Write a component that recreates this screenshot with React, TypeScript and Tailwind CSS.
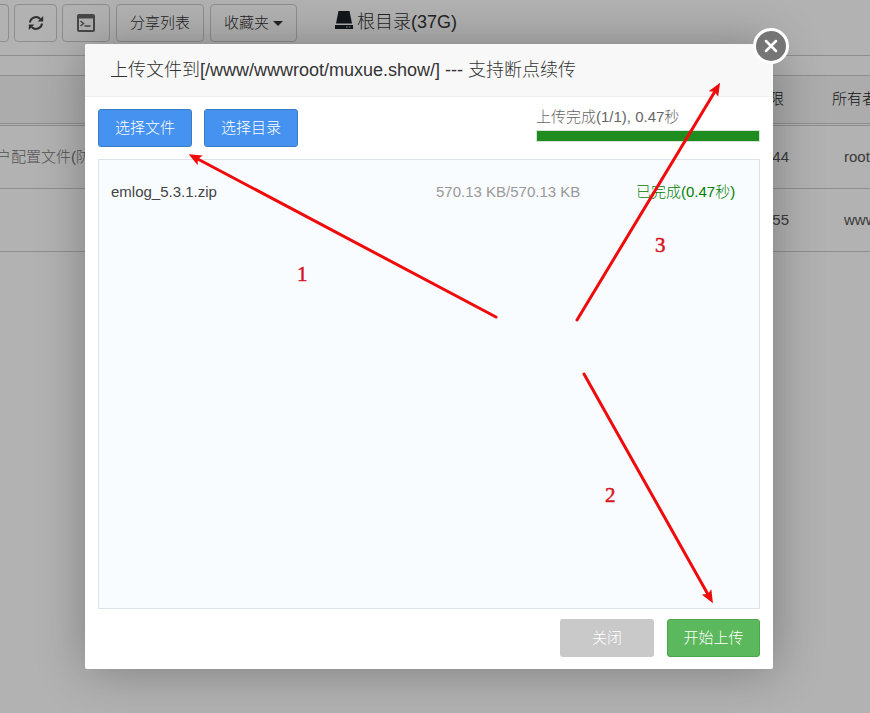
import React from "react";

const files = [
  { name: "emlog_5.3.1.zip", size: "570.13 KB/570.13 KB", status: "已完成(0.47秒)" },
];

const RefreshIcon = () => (
  <svg width="16" height="16" viewBox="0 0 16 16" fill="none" stroke="#444" strokeWidth="2" aria-hidden="true">
    <path d="M2 7.500A6 6 0 0 1 12.300 4" />
    <path d="M14 8.500A6 6 0 0 1 3.700 12" />
    <path d="M15.200 1v5.500H9.700z" fill="#444" stroke="none" />
    <path d="M0.800 15V9.500h5.500z" fill="#444" stroke="none" />
  </svg>
);

const TerminalIcon = () => (
  <svg width="18" height="18" viewBox="0 0 18 18" fill="none" stroke="#666" aria-hidden="true">
    <rect x="1" y="1" width="16" height="16" rx="1" strokeWidth="2" />
    <path d="M1 3h16" strokeWidth="3" />
    <path d="M3.500 7l3 2.500-3 2.500M7.500 12h6" strokeWidth="1.500" />
  </svg>
);

const DiskIcon = () => (
  <svg width="18" height="18" viewBox="0 0 18 18" fill="#1b2028" aria-hidden="true">
    <path d="M3.500 0h11l2.500 12.500H1z" />
    <path d="M0 14h18v4H0z" />
    <path d="M11 15.500h1.500v1H11zM14 15.500h1.500v1H14z" fill="#ddd" />
  </svg>
);

const Annotations = () => (
  <svg
    className="pointer-events-none absolute left-0 top-0"
    width="688"
    height="625"
    viewBox="0 0 688 625"
    aria-hidden="true"
  >
    <defs>
      <marker
        id="head"
        markerUnits="userSpaceOnUse"
        markerWidth="14"
        markerHeight="12"
        refX="7"
        refY="6"
        orient="auto"
      >
        <path d="M13 6L0 0.500L2.500 6L0 11.500z" fill="#f00a0a" />
      </marker>
    </defs>
    <g stroke="#f00a0a" strokeWidth="3" strokeLinecap="round">
      <path d="M411 273L109 113" markerEnd="url(#head)" />
      <path d="M492 276L632 44" markerEnd="url(#head)" />
      <path d="M499 330L625 554" markerEnd="url(#head)" />
    </g>
    <g
      fill="#d9121f"
      stroke="#d9121f"
      strokeWidth="0.5"
      className="font-['Liberation_Serif',serif] text-[21px]"
    >
      <text x="212" y="237">1</text>
      <text x="570" y="208">3</text>
      <text x="520" y="458">2</text>
    </g>
  </svg>
);

const toolButton =
  "flex h-[38px] items-center justify-center rounded border border-[#ccc] text-[15px] text-[#333]";

const App = () => {
  return (
    <div className="relative h-screen overflow-hidden bg-white font-['Liberation_Sans','Noto_Sans_CJK_SC',sans-serif] text-[15px] font-light text-[#555]">
      {/* File manager */}
      <div className="flex h-14 items-start border-b border-[#ccc] pt-1">
        <button className={`${toolButton} -ml-2 w-[17px]`} aria-label="返回"></button>
        <button className={`${toolButton} ml-[5px] w-[43px]`} aria-label="刷新">
          <RefreshIcon />
        </button>
        <button className={`${toolButton} ml-[5px] w-12`} aria-label="终端">
          <TerminalIcon />
        </button>
        <button className={`${toolButton} ml-1.5 w-[88px]`}>分享列表</button>
        <button className={`${toolButton} ml-1.5 w-[87px] gap-1`}>
          收藏夹
          <svg width="10" height="5" viewBox="0 0 10 5" fill="#333" aria-hidden="true">
            <path d="M0 0h10l-5 5z" />
          </svg>
        </button>
        <div className="ml-[38px] flex h-8 items-center gap-1 text-[18px] text-[#333]">
          <DiskIcon />
          <span className="pt-1">根目录(37G)</span>
        </div>
      </div>

      <table className="mt-[19px] w-full table-fixed border-collapse whitespace-nowrap text-left">
        <thead>
          <tr className="h-12 border-y border-[#ccc] bg-[#f6f6f6] text-[#222]">
            <th className="font-light"></th>
            <th className="w-[78px] font-light">权限</th>
            <th className="w-[38px] font-light">所有者</th>
          </tr>
        </thead>
        <tbody>
          <tr className="h-0.5">
            <td colSpan={3}></td>
          </tr>
          <tr className="h-[63px] border-y border-[#ccc]">
            <td>
              <span className="-ml-1 text-[#777]">户配置文件(防</span>
            </td>
            <td className="pl-2.5">644</td>
            <td className="pl-3">root</td>
          </tr>
          <tr className="h-[63px] border-b border-[#ccc]">
            <td></td>
            <td className="pl-2.5">755</td>
            <td className="pl-3">www</td>
          </tr>
        </tbody>
      </table>

      {/* Upload dialog */}
      <div className="absolute inset-0 flex items-center justify-center bg-black/30 pr-3">
        <div
          role="dialog"
          aria-labelledby="upload-title"
          className="relative w-full max-w-[688px] rounded-xs bg-white shadow-[1px_1px_50px_rgba(0,0,0,0.3)]"
        >
          <h2
            id="upload-title"
            className="h-[53px] rounded-t-xs border-b border-[#eee] bg-[#f8f8f8] px-[25px] text-[18px] leading-[52px] text-[#333]"
          >
            上传文件到[/www/wwwroot/muxue.show/] --- 支持断点续传
          </h2>

          <div className="px-[13px] py-3">
            <div className="flex h-[38px] items-start gap-3">
              <button className="h-[38px] rounded-[3px] border border-[#3a7cc4] bg-[#4592f0] px-4 text-white">
                选择文件
              </button>
              <button className="h-[38px] rounded-[3px] border border-[#3a7cc4] bg-[#4592f0] px-4 text-white">
                选择目录
              </button>
              <div className="ml-auto w-56 text-[#666]">
                <p className="h-[21px] leading-4">上传完成(1/1), 0.47秒</p>
                <div className="h-3 border border-[#d5e5d5]">
                  <div className="h-full w-full bg-[#1f8c1f]"></div>
                </div>
              </div>
            </div>

            <ul className="mt-3 h-[450px] border border-[#dde2ea] bg-[#f9fcff] px-3 py-5">
              {files.map((file) => (
                <li key={file.name} className="flex leading-6">
                  <span className="w-[325px] text-[#444]">{file.name}</span>
                  <span className="w-[200px] text-[#999]">{file.size}</span>
                  <span className="text-[#008000]">{file.status}</span>
                </li>
              ))}
            </ul>

            <div className="mt-2.5 flex justify-end gap-[13px]">
              <button className="h-[38px] w-[94px] rounded-[3px] bg-[#c9c9c9] text-white">
                关闭
              </button>
              <button className="h-[38px] w-[93px] rounded-[3px] border border-[#4fa34f] bg-[#5cb85c] text-white">
                开始上传
              </button>
            </div>
          </div>

          <button
            aria-label="关闭窗口"
            className="absolute -right-4 -top-4 flex size-9 items-center justify-center rounded-full border-[3px] border-white bg-[#757575]"
          >
            <svg width="14" height="14" viewBox="0 0 14 14" stroke="#fff" strokeWidth="2.500" strokeLinecap="round" aria-hidden="true">
              <path d="M2 2l10 10M12 2L2 12" />
            </svg>
          </button>

          <Annotations />
        </div>
      </div>
    </div>
  );
};

export default App;
